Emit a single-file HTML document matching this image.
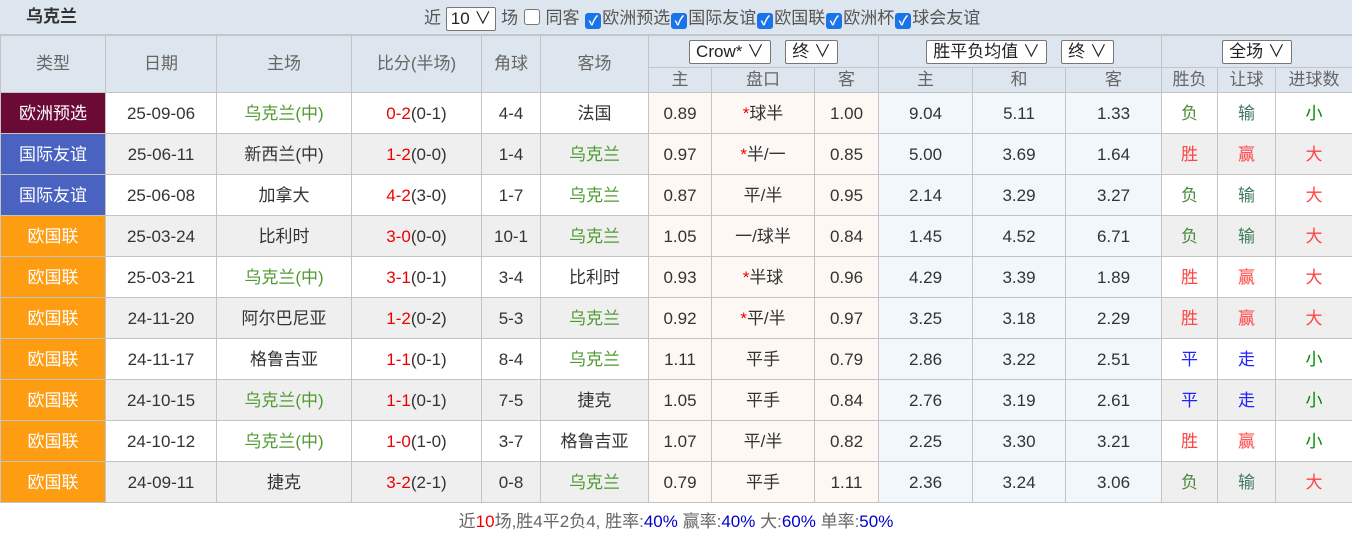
<!DOCTYPE html>
<html><head><meta charset="utf-8"><style>
*{margin:0;padding:0;box-sizing:border-box}
body{width:1352px;height:538px;background:#fff;font-family:"Liberation Sans","Noto Sans CJK SC",sans-serif;overflow:hidden;position:relative}
.top{position:absolute;left:0;top:0;width:1352px;height:35px;background:#dde5ee;border-bottom:1px solid #c4c9cf}
.title{position:absolute;left:26px;top:7px;font-size:17px;line-height:20px;color:#333;font-weight:bold}
.filt{position:absolute;left:424px;top:7px;font-size:17px;line-height:20px;color:#555;white-space:nowrap}
.sel{display:inline-block;border:1px solid #777;background:#fff;border-radius:2px;height:24px;line-height:22px;padding:0 6px;color:#222;vertical-align:middle;font-size:17px}
.cb{display:inline-block;width:16px;height:16px;border-radius:3px;vertical-align:-2px;margin:0 1px}
.cb.on{background:#1a73e8;color:#fff;font-size:13px;line-height:16px;text-align:center;font-weight:bold}
.cb.off{border:1px solid #777;background:#fff}
table{position:absolute;left:0;top:35px;border-collapse:collapse;table-layout:fixed;width:1352px}
td,th{border:1px solid #c4c4c4;text-align:center;font-size:17px;line-height:18px;font-weight:normal;color:#333;white-space:nowrap;overflow:hidden;vertical-align:middle}
th{background:#dde5ee;color:#666}
tr.h1 th{height:32px}
tr.h2 th{height:25px}
tr.d td{height:41px;padding-top:2px}
tr.g td{background:#efefef}
td.o1{background:#fdf8f4!important}
td.o2{background:#f2f7fb!important}
td.t1{background:#6b0a35!important;color:#fff}
td.t2{background:#4a63c0!important;color:#fff}
td.t3{background:#fe9c12!important;color:#fff}
.gr{color:#4f9a30}.rd{color:#f00}.fr{color:#f44}.fg{color:#4a8a3a}.fs{color:#3f7a5a}.fb{color:#22f}.fx{color:#080}.st{color:#e00}
.foot{position:absolute;left:0;top:512px;width:1352px;text-align:center;font-size:17px;line-height:20px;color:#666}
.foot b{font-weight:normal;color:#00c}
</style></head><body>
<div class="top"><div class="title">乌克兰</div>
<div class="filt">近 <span class="sel" style="padding:0 4px">10 ∨</span> 场 <span class="cb off"></span> 同客 <span class="cb on">✓</span>欧洲预选<span class="cb on">✓</span>国际友谊<span class="cb on">✓</span>欧国联<span class="cb on">✓</span>欧洲杯<span class="cb on">✓</span>球会友谊</div></div>
<table>
<colgroup><col style="width:105px"><col style="width:111px"><col style="width:135px"><col style="width:130px"><col style="width:59px"><col style="width:108px"><col style="width:63px"><col style="width:103px"><col style="width:64px"><col style="width:94px"><col style="width:93px"><col style="width:96px"><col style="width:56px"><col style="width:58px"><col style="width:77px"></colgroup>
<tr class="h1"><th rowspan="2">类型</th><th rowspan="2">日期</th><th rowspan="2">主场</th><th rowspan="2">比分(半场)</th><th rowspan="2">角球</th><th rowspan="2">客场</th><th colspan="3"><span class="sel">Crow* ∨</span>&nbsp;&nbsp;&nbsp;<span class="sel">终 ∨</span></th><th colspan="3"><span class="sel">胜平负均值 ∨</span>&nbsp;&nbsp;&nbsp;<span class="sel">终 ∨</span></th><th colspan="3"><span class="sel">全场 ∨</span></th></tr>
<tr class="h2"><th>主</th><th>盘口</th><th>客</th><th>主</th><th>和</th><th>客</th><th>胜负</th><th>让球</th><th>进球数</th></tr>
<tr class="d"><td class="t1">欧洲预选</td><td>25-09-06</td><td class="gr">乌克兰(中)</td><td><span class="st">0-2</span>(0-1)</td><td>4-4</td><td>法国</td><td class="o1">0.89</td><td class="o1"><span class="st">*</span>球半</td><td class="o1">1.00</td><td class="o2">9.04</td><td class="o2">5.11</td><td class="o2">1.33</td><td class="fg">负</td><td class="fs">输</td><td class="fx">小</td></tr>
<tr class="d g"><td class="t2">国际友谊</td><td>25-06-11</td><td>新西兰(中)</td><td><span class="st">1-2</span>(0-0)</td><td>1-4</td><td class="gr">乌克兰</td><td class="o1">0.97</td><td class="o1"><span class="st">*</span>半/一</td><td class="o1">0.85</td><td class="o2">5.00</td><td class="o2">3.69</td><td class="o2">1.64</td><td class="fr">胜</td><td class="fr">赢</td><td class="fr">大</td></tr>
<tr class="d"><td class="t2">国际友谊</td><td>25-06-08</td><td>加拿大</td><td><span class="st">4-2</span>(3-0)</td><td>1-7</td><td class="gr">乌克兰</td><td class="o1">0.87</td><td class="o1">平/半</td><td class="o1">0.95</td><td class="o2">2.14</td><td class="o2">3.29</td><td class="o2">3.27</td><td class="fg">负</td><td class="fs">输</td><td class="fr">大</td></tr>
<tr class="d g"><td class="t3">欧国联</td><td>25-03-24</td><td>比利时</td><td><span class="st">3-0</span>(0-0)</td><td>10-1</td><td class="gr">乌克兰</td><td class="o1">1.05</td><td class="o1">一/球半</td><td class="o1">0.84</td><td class="o2">1.45</td><td class="o2">4.52</td><td class="o2">6.71</td><td class="fg">负</td><td class="fs">输</td><td class="fr">大</td></tr>
<tr class="d"><td class="t3">欧国联</td><td>25-03-21</td><td class="gr">乌克兰(中)</td><td><span class="st">3-1</span>(0-1)</td><td>3-4</td><td>比利时</td><td class="o1">0.93</td><td class="o1"><span class="st">*</span>半球</td><td class="o1">0.96</td><td class="o2">4.29</td><td class="o2">3.39</td><td class="o2">1.89</td><td class="fr">胜</td><td class="fr">赢</td><td class="fr">大</td></tr>
<tr class="d g"><td class="t3">欧国联</td><td>24-11-20</td><td>阿尔巴尼亚</td><td><span class="st">1-2</span>(0-2)</td><td>5-3</td><td class="gr">乌克兰</td><td class="o1">0.92</td><td class="o1"><span class="st">*</span>平/半</td><td class="o1">0.97</td><td class="o2">3.25</td><td class="o2">3.18</td><td class="o2">2.29</td><td class="fr">胜</td><td class="fr">赢</td><td class="fr">大</td></tr>
<tr class="d"><td class="t3">欧国联</td><td>24-11-17</td><td>格鲁吉亚</td><td><span class="st">1-1</span>(0-1)</td><td>8-4</td><td class="gr">乌克兰</td><td class="o1">1.11</td><td class="o1">平手</td><td class="o1">0.79</td><td class="o2">2.86</td><td class="o2">3.22</td><td class="o2">2.51</td><td class="fb">平</td><td class="fb">走</td><td class="fx">小</td></tr>
<tr class="d g"><td class="t3">欧国联</td><td>24-10-15</td><td class="gr">乌克兰(中)</td><td><span class="st">1-1</span>(0-1)</td><td>7-5</td><td>捷克</td><td class="o1">1.05</td><td class="o1">平手</td><td class="o1">0.84</td><td class="o2">2.76</td><td class="o2">3.19</td><td class="o2">2.61</td><td class="fb">平</td><td class="fb">走</td><td class="fx">小</td></tr>
<tr class="d"><td class="t3">欧国联</td><td>24-10-12</td><td class="gr">乌克兰(中)</td><td><span class="st">1-0</span>(1-0)</td><td>3-7</td><td>格鲁吉亚</td><td class="o1">1.07</td><td class="o1">平/半</td><td class="o1">0.82</td><td class="o2">2.25</td><td class="o2">3.30</td><td class="o2">3.21</td><td class="fr">胜</td><td class="fr">赢</td><td class="fx">小</td></tr>
<tr class="d g"><td class="t3">欧国联</td><td>24-09-11</td><td>捷克</td><td><span class="st">3-2</span>(2-1)</td><td>0-8</td><td class="gr">乌克兰</td><td class="o1">0.79</td><td class="o1">平手</td><td class="o1">1.11</td><td class="o2">2.36</td><td class="o2">3.24</td><td class="o2">3.06</td><td class="fg">负</td><td class="fs">输</td><td class="fr">大</td></tr>
</table>
<div class="foot">近<span style="color:#e00">10</span>场,胜4平2负4, 胜率:<b>40%</b> 赢率:<b>40%</b> 大:<b>60%</b> 单率:<b>50%</b></div>
</body></html>
